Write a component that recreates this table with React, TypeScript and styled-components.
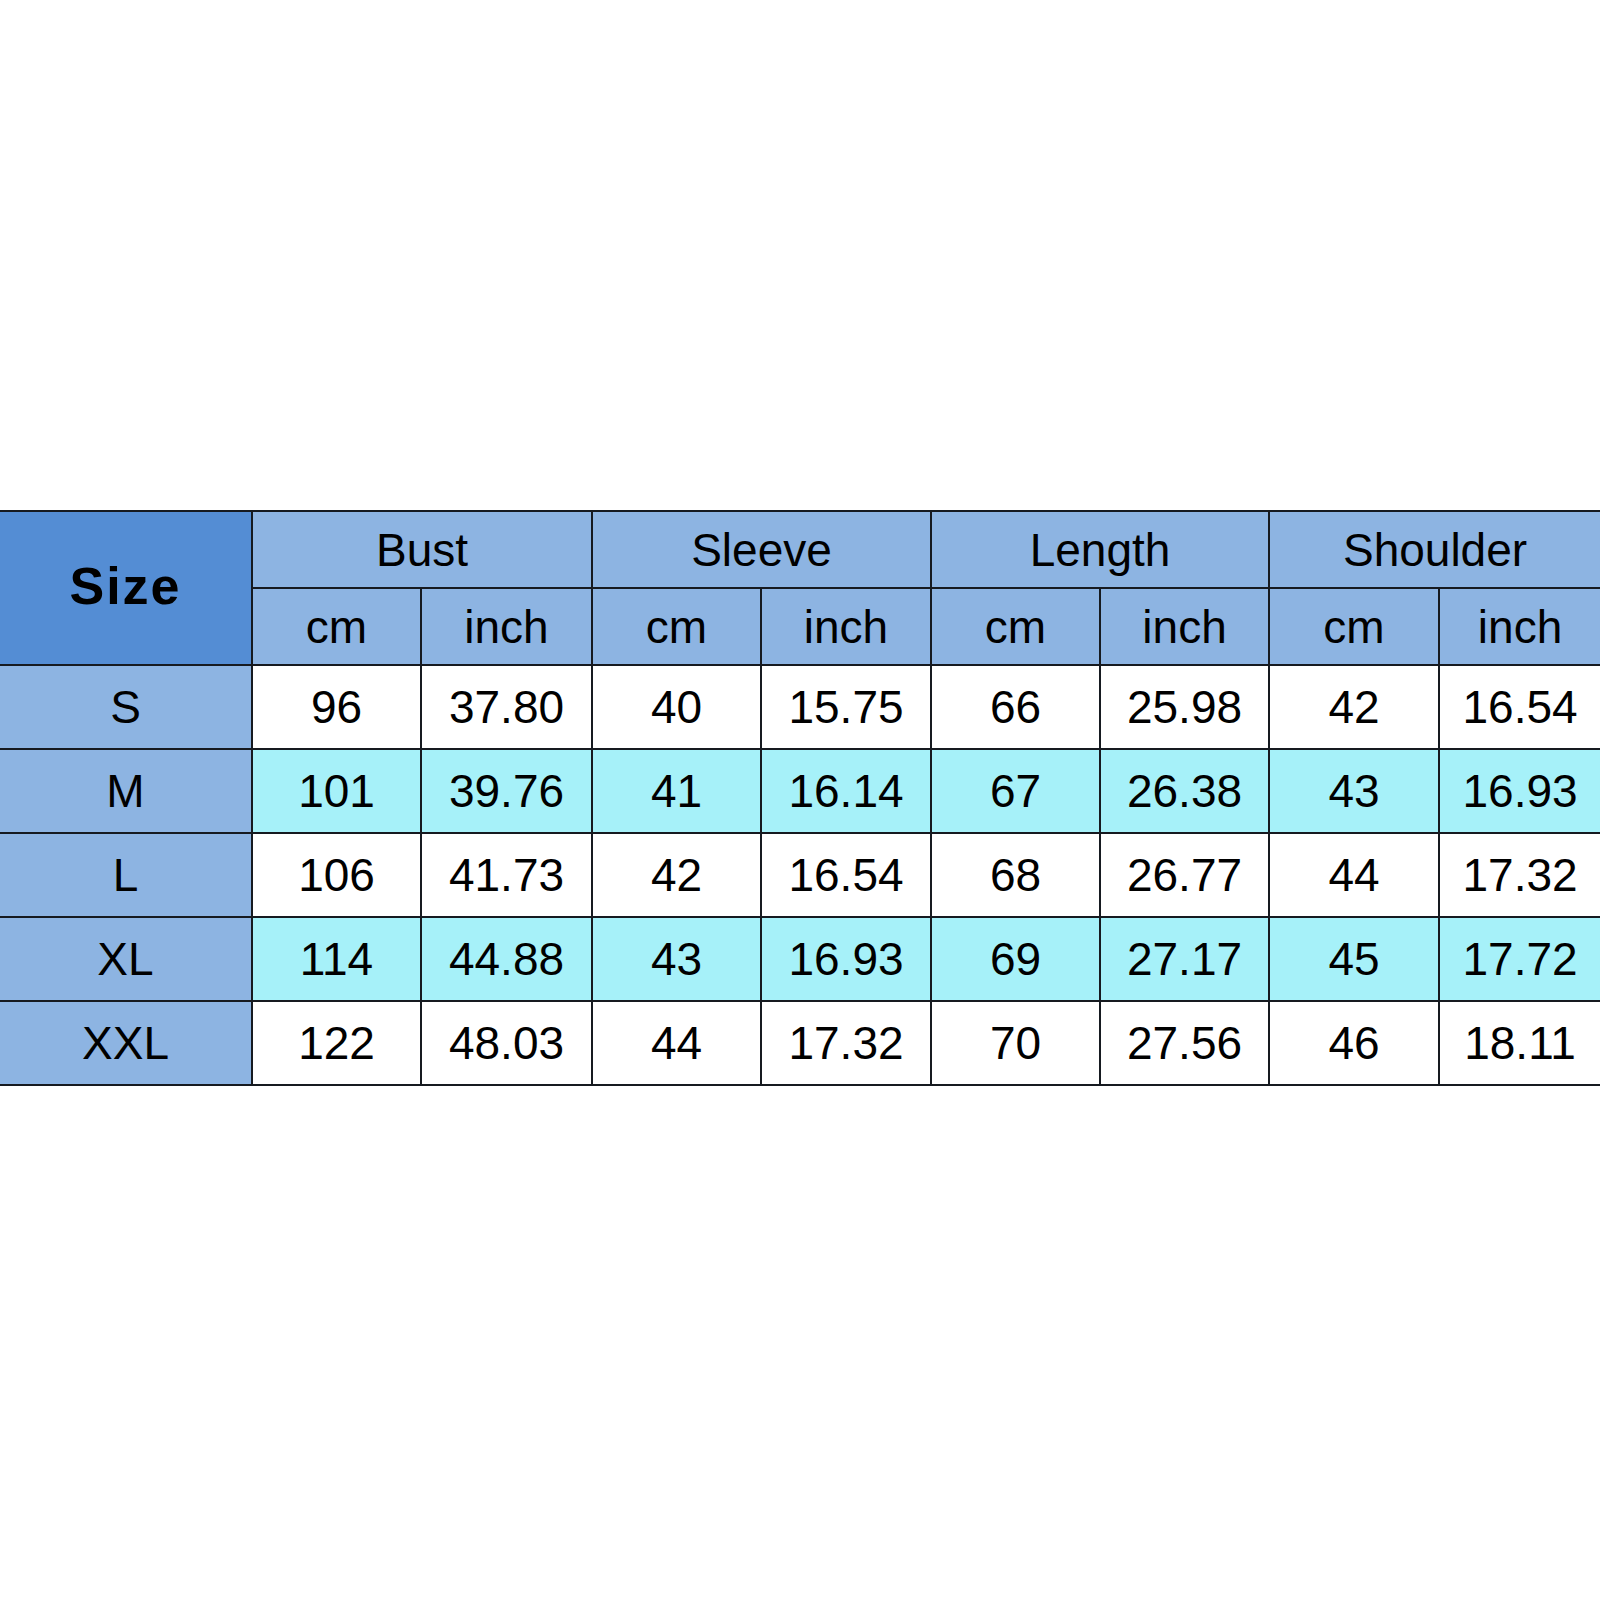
import React from "react";
import styled, { createGlobalStyle } from "styled-components";

const GlobalStyle = createGlobalStyle`
  html, body {
    margin: 0;
    padding: 0;
    background: #ffffff;
  }
  body {
    font-family: "Comic Sans MS", "Liberation Sans", Arial, sans-serif;
  }
`;

const Page = styled.div`
  width: 1600px;
  height: 1600px;
  overflow: hidden;
  background: #ffffff;
  padding-top: 510px;
  box-sizing: border-box;
`;

const Table = styled.table`
  width: 1600px;
  border-collapse: collapse;
  table-layout: fixed;
  font-family: "Liberation Sans", Arial, sans-serif;
  color: #000;
`;

const Cell = styled.td<{ $bg: string; $h: number }>`
  background: ${(p) => p.$bg};
  height: ${(p) => p.$h}px;
  border: 2px solid #161a20;
  padding: 0;
  text-align: center;
  vertical-align: middle;
  font-size: 46px;
  font-weight: 400;
  line-height: 1;
  box-sizing: border-box;
  &:first-child {
    border-left: none;
  }
  &:last-child {
    border-right: none;
  }
`;

const SizeHead = styled.th`
  background: #548dd4;
  border: 2px solid #161a20;
  border-left: none;
  font-size: 52px;
  font-weight: 700;
  letter-spacing: 2px;
  line-height: 1;
  text-align: center;
  vertical-align: middle;
  padding: 0 0 4px 0;
`;

const GroupHead = styled.th<{ $last?: boolean }>`
  background: #8db4e2;
  height: 77px;
  border: 2px solid #161a20;
  ${(p) => (p.$last ? "border-right: none;" : "")}
  font-size: 46px;
  font-weight: 400;
  line-height: 1;
  text-align: center;
  vertical-align: middle;
  padding: 0;
  box-sizing: border-box;
`;

const widths = [252, 169, 171, 169, 170, 169, 169, 170, 161];

const groups = ["Bust", "Sleeve", "Length", "Shoulder"];

const rows: [string, string[]][] = [
  ["S", ["96", "37.80", "40", "15.75", "66", "25.98", "42", "16.54"]],
  ["M", ["101", "39.76", "41", "16.14", "67", "26.38", "43", "16.93"]],
  ["L", ["106", "41.73", "42", "16.54", "68", "26.77", "44", "17.32"]],
  ["XL", ["114", "44.88", "43", "16.93", "69", "27.17", "45", "17.72"]],
  ["XXL", ["122", "48.03", "44", "17.32", "70", "27.56", "46", "18.11"]],
];

const HEADER_BLUE = "#8db4e2";
const CYAN = "#a6f1f9";
const WHITE = "#ffffff";

export default function App() {
  return (
    <>
      <GlobalStyle />
      <Page>
        <Table>
          <colgroup>
            {widths.map((w, i) => (
              <col key={i} style={{ width: w }} />
            ))}
          </colgroup>
          <thead>
            <tr>
              <SizeHead rowSpan={2}>Size</SizeHead>
              {groups.map((g, i) => (
                <GroupHead key={g} colSpan={2} $last={i === groups.length - 1}>
                  {g}
                </GroupHead>
              ))}
            </tr>
            <tr>
              {groups.flatMap((g) => [
                <Cell as="th" key={g + "cm"} $bg={HEADER_BLUE} $h={77}>
                  cm
                </Cell>,
                <Cell as="th" key={g + "in"} $bg={HEADER_BLUE} $h={77}>
                  inch
                </Cell>,
              ])}
            </tr>
          </thead>
          <tbody>
            {rows.map(([size, vals], ri) => {
              const bg = ri % 2 === 1 ? CYAN : WHITE;
              return (
                <tr key={size}>
                  <Cell $bg={HEADER_BLUE} $h={84}>
                    {size}
                  </Cell>
                  {vals.map((v, ci) => (
                    <Cell key={ci} $bg={bg} $h={84}>
                      {v}
                    </Cell>
                  ))}
                </tr>
              );
            })}
          </tbody>
        </Table>
      </Page>
    </>
  );
}
